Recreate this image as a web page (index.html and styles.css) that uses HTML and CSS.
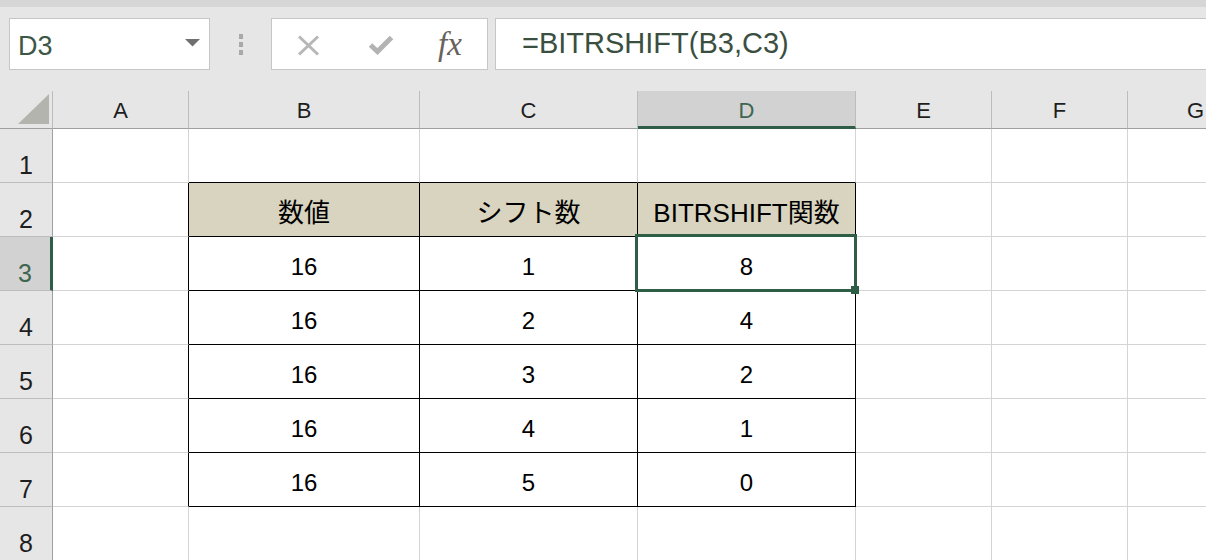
FILE: index.html
```html
<!DOCTYPE html>
<html lang="ja">
<head>
    <meta charset="UTF-8">
    <title>BITRSHIFT関数</title>
    <link rel="stylesheet" href="styles.css">
</head>
<body>
    <div class="toolbar">
        <div class="namebox">
            <span>D3</span>
            <svg class="caret" width="15" height="8" viewBox="0 0 15 8"><path d="M0 0H15L7.5 7.5Z" fill="#707070"/></svg>
        </div>
        <div class="grip"><i></i><i></i><i></i></div>
        <div class="fnbtns">
            <svg class="btn-x" width="23" height="21" viewBox="0 0 23 21"><path d="M2 1.5L21 19.5M21 1.5L2 19.5" stroke="#b7b7b7" stroke-width="3" fill="none"/></svg>
            <svg class="btn-ok" width="26" height="20" viewBox="0 0 26 20"><path d="M2.5 10L9.5 16.5L23.5 2.5" stroke="#b3b3b3" stroke-width="5" fill="none"/></svg>
            <span class="fx">fx</span>
        </div>
        <div class="formula">=BITRSHIFT(B3,C3)</div>
    </div>

    <div class="sheet">
        <!-- column headers -->
        <div class="hd corner"><svg width="31" height="30" viewBox="0 0 31 30"><path d="M31 0V30H0Z" fill="#b4b4ae"/></svg></div>
        <div class="hd">A</div>
        <div class="hd">B</div>
        <div class="hd">C</div>
        <div class="hd sel-col">D</div>
        <div class="hd">E</div>
        <div class="hd">F</div>
        <div class="hd">G</div>

        <div class="rh">1</div>
        <div class="c"></div>
        <div class="c tt"></div>
        <div class="c tt"></div>
        <div class="c tt"></div>
        <div class="c"></div>
        <div class="c"></div>
        <div class="c"></div>

        <div class="rh">2</div>
        <div class="c tl"></div>
        <div class="c t th">数値</div>
        <div class="c t th">シフト数</div>
        <div class="c t th">BITRSHIFT関数</div>
        <div class="c"></div>
        <div class="c"></div>
        <div class="c"></div>

        <div class="rh sel-row">3</div>
        <div class="c tl"></div>
        <div class="c t">16</div>
        <div class="c t">1</div>
        <div class="c t">8</div>
        <div class="c"></div>
        <div class="c"></div>
        <div class="c"></div>

        <div class="rh">4</div>
        <div class="c tl"></div>
        <div class="c t">16</div>
        <div class="c t">2</div>
        <div class="c t">4</div>
        <div class="c"></div>
        <div class="c"></div>
        <div class="c"></div>

        <div class="rh">5</div>
        <div class="c tl"></div>
        <div class="c t">16</div>
        <div class="c t">3</div>
        <div class="c t">2</div>
        <div class="c"></div>
        <div class="c"></div>
        <div class="c"></div>

        <div class="rh">6</div>
        <div class="c tl"></div>
        <div class="c t">16</div>
        <div class="c t">4</div>
        <div class="c t">1</div>
        <div class="c"></div>
        <div class="c"></div>
        <div class="c"></div>

        <div class="rh">7</div>
        <div class="c tl"></div>
        <div class="c t">16</div>
        <div class="c t">5</div>
        <div class="c t">0</div>
        <div class="c"></div>
        <div class="c"></div>
        <div class="c"></div>

        <div class="rh">8</div>
        <div class="c"></div>
        <div class="c"></div>
        <div class="c"></div>
        <div class="c"></div>
        <div class="c"></div>
        <div class="c"></div>
        <div class="c"></div>

        <!-- active cell D3 -->
        <div class="selection"></div>
        <div class="handle"></div>
    </div>
</body>
</html>
```

FILE: styles.css
```css
body { margin: 0; background: #fff; font-family: "Liberation Sans", "Noto Sans CJK JP", sans-serif; width: 1206px; height: 560px; overflow: hidden; }

/* formula bar */
.toolbar { display: flex; height: 52px; padding: 11px 0 21px 9px; background: #e6e6e6; border-top: 7px solid #d6d6d6; }
.namebox { width: 201px; box-sizing: border-box; display: flex; align-items: center; justify-content: space-between; padding: 0 9px 0 8px; background: #fff; border: 1px solid #c6c6c6; }
.namebox span { font-size: 27px; color: #3d5747; padding-top: 5px; }
.caret { margin-top: -3px; }
.grip { width: 61px; display: flex; flex-direction: column; align-items: center; justify-content: center; gap: 3px; }
.grip i { display: block; width: 4px; height: 5px; background: #a9a9a9; }
.fnbtns { width: 217px; box-sizing: border-box; display: flex; align-items: center; background: #fff; border: 1px solid #c6c6c6; }
.btn-x { margin-left: 25px; margin-top: 3px; }
.btn-ok { margin-left: 48px; margin-top: 2px; }
.fx { margin-left: 44px; font-family: "Liberation Serif", serif; font-style: italic; font-size: 33px; color: #67625b; }
.formula { flex: 1; margin: 0 -10px 0 7px; display: flex; align-items: center; padding: 0 0 2px 26px; background: #fff; border: 1px solid #c6c6c6; font-size: 29px; color: #3b4f41; }

/* grid */
.sheet { position: relative; display: grid; grid-template-columns: 53px 136px 231px 218px 218px 136px 136px 136px; grid-template-rows: 38px repeat(8, 54px); }
.sheet > div { box-sizing: border-box; }
.c, .hd, .rh { display: flex; justify-content: center; align-items: flex-end; border-right: 1px solid #d4d4d4; border-bottom: 1px solid #d4d4d4; color: #000; }
.c { font-size: 24px; line-height: 24px; padding-bottom: 11px; }
.hd { background: #e6e6e6; border-right-color: #bcbcbc; border-bottom-color: #9f9f9f; font-size: 22px; line-height: 22px; padding-bottom: 6px; color: #1e1e1e; }
.rh { background: #e6e6e6; border-right-color: #a0a0a0; border-bottom-color: #bdbdbd; font-size: 25px; line-height: 25px; padding-bottom: 4px; color: #1e1e1e; }
.corner { justify-content: flex-end; padding: 0 3px 4px 0; }
.corner svg { display: block; }

.sel-col { background: #d2d2d2; color: #3e6650; border-bottom: 3px solid #2e5e45; padding-bottom: 4px; }
.sel-row { background: #d2d2d2; color: #3e6650; border-right: 3px solid #2e5e45; }

/* bordered table B2:D7 */
.t { border-right-color: #000; border-bottom-color: #000; }
.tl { border-right-color: #000; }
.tt { border-bottom-color: #000; }
.th { background: #d8d4bf; font-size: 26px; line-height: 26px; padding-bottom: 10px; }

.selection { position: absolute; left: 635px; top: 143px; width: 222px; height: 58px; border: 3px solid #2e5e45; }
.handle { position: absolute; left: 851px; top: 195px; width: 8px; height: 8px; background: #2e5e45; }
```
